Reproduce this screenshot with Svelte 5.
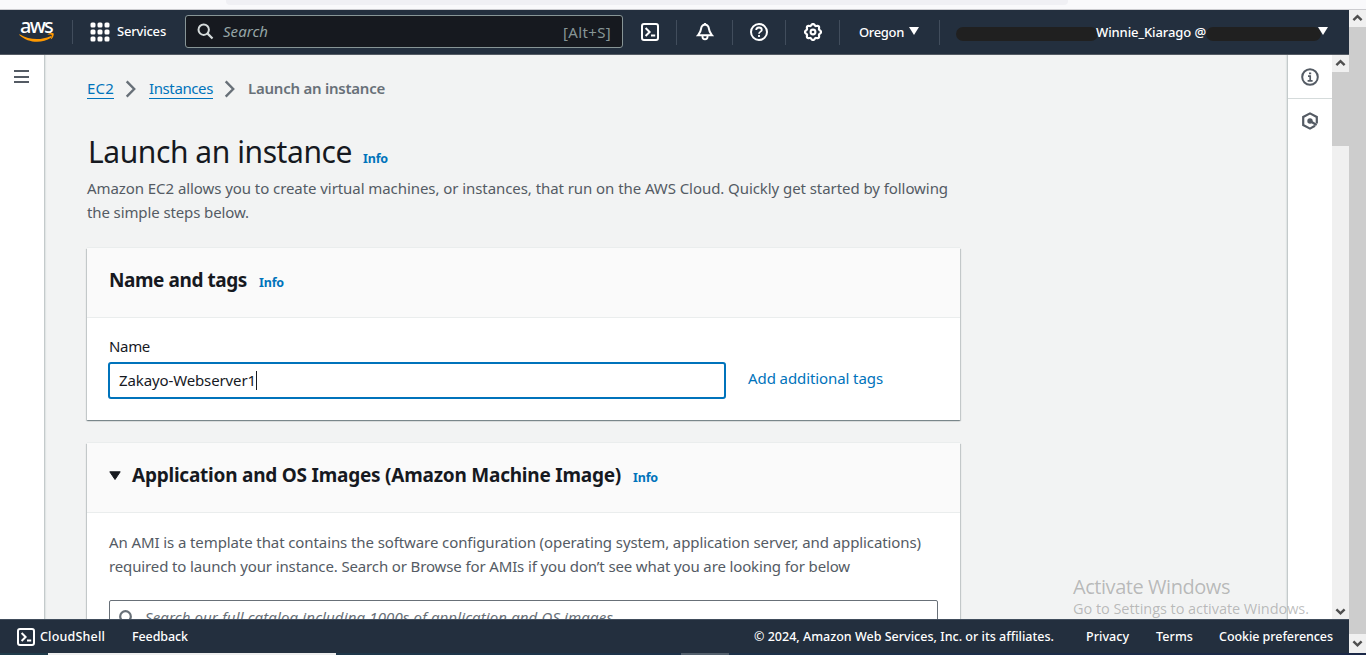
<script>
  // Spreads the tracking of a line so that it fills the given width in pixels.
  function fit(node, width) {
    node.style.letterSpacing = '0px';
    const count = node.textContent.length;
    const natural = node.getBoundingClientRect().width;
    node.style.letterSpacing = (width - natural) / count + 'px';
  }

  const dots = [0, 1, 2, 3, 4, 5, 6, 7, 8];
  const gearTeeth = Array.from({ length: 97 }, (_, i) => {
    const a = (i / 96) * Math.PI * 2;
    const r = 7.3 + 0.75 * Math.cos(a * 8);
    return `${(9 + r * Math.sin(a)).toFixed(2)},${(9 - r * Math.cos(a)).toFixed(2)}`;
  }).join(' ');
</script>

{#snippet shell()}
  <svg class="ico" width="18" height="18" viewBox="0 0 18 18" fill="none" stroke="#fff" stroke-width="2">
    <rect x="1" y="1" width="16" height="16" rx="2" />
    <path d="M4.6 5 8.6 9l-4 4M10 12.5h4.2" />
  </svg>
{/snippet}

{#snippet chevron(up)}
  <svg width="17" height="17" viewBox="0 0 17 17" fill="none" stroke="#505050" stroke-width="2.4">
    {#if up}<path d="M4.4 10.2 8.5 6.1l4.1 4.1" />{:else}<path d="M4.4 7.3 8.5 11.4l4.1-4.1" />{/if}
  </svg>
{/snippet}

{#snippet crumbArrow()}
  <svg class="arrow" width="12" height="18" viewBox="0 0 12 18" fill="none" stroke="#687078" stroke-width="2.4">
    <path d="M1.7 1.4 9.2 9l-7.5 7.6" />
  </svg>
{/snippet}

<div class="window">
  <div class="chrome"><div class="urlbar"></div></div>

  <div class="viewport">
    <div class="console">
      <header>
        <div class="logo">
          <span use:fit={32}>aws</span>
          <svg width="36" height="10" viewBox="0 0 36 10">
            <path d="M1 1.4C10 7 22 7.4 31.3 3.2c1.1-.5 1.8.7.7 1.5C23 10.8 9 10 .6 2.2.1 1.6.4 1 1 1.4Z" fill="#f90" />
            <path d="M28.8.9c2-1.1 5.3-1.1 5.8-.5.5.7-.2 4-2.2 5.7-.4.3-.8.1-.6-.4.6-1.4 1.2-3.3.8-3.8-.4-.5-2.3-.4-3.5-.3-.6 0-.7-.4-.3-.7Z" fill="#f90" />
          </svg>
        </div>
        <div class="services">
          <div class="dots">{#each dots as d (d)}<i></i>{/each}</div>
          <b use:fit={49}>Services</b>
        </div>
        <div class="search">
          <svg width="17" height="17" viewBox="0 0 17 17" fill="none" stroke="#d5dbdb" stroke-width="2">
            <circle cx="6.7" cy="6.7" r="5.2" /><path d="m10.4 10.4 5.1 5.1" stroke-width="2.2" />
          </svg>
          <em use:fit={45}>Search</em>
          <span class="key" use:fit={48}>[Alt+S]</span>
        </div>
        <div class="cell c-shell">{@render shell()}</div>
        <div class="cell c-bell">
          <svg class="ico" width="18" height="18" viewBox="0 0 18 18" fill="none" stroke="#fff" stroke-width="2">
            <path d="M9 1.4C6.6 1.8 5.3 3.4 5.1 5.7 4.9 8.3 4.2 9.7 2 12.3h14c-2.2-2.6-2.9-4-3.1-6.6C12.7 3.4 11.4 1.8 9 1.4Z" />
            <path d="M6.5 12.6v1.2a2.5 2.5 0 0 0 5 0v-1.2M9 0v2" stroke-width="1.9" />
          </svg>
        </div>
        <div class="cell c-help">
          <svg class="ico" width="18" height="18" viewBox="0 0 18 18" fill="none" stroke="#fff" stroke-width="2">
            <circle cx="9" cy="9" r="8" />
            <path d="M6.2 7.1C6.2 5.3 7.4 4.5 9 4.5s2.8.9 2.8 2.4C11.8 8.6 9 8.7 9 10.800M9 12v2" stroke-width="1.8" />
          </svg>
        </div>
        <div class="cell c-gear">
          <svg class="ico" width="18" height="18" viewBox="0 0 18 18" fill="none" stroke="#fff" stroke-width="2.2">
            <polygon points={gearTeeth} /><circle cx="9" cy="9" r="2.4" stroke-width="2.1" />
          </svg>
        </div>
        <div class="cell c-region"><b use:fit={45}>Oregon</b><i class="caret"></i></div>
        <div class="account">
          <i class="mark first"></i><b use:fit={110}>Winnie_Kiarago @</b><i class="mark second"></i><i class="caret"></i>
        </div>
      </header>

      <div class="body">
        <nav class="rail">
          <i></i><i></i><i></i>
        </nav>
        <main>
          <div class="crumbs">
            <a href="#ec2" use:fit={27}>EC2</a>
            {@render crumbArrow()}
            <a href="#instances" use:fit={64}>Instances</a>
            {@render crumbArrow()}
            <b use:fit={137}>Launch an instance</b>
          </div>
          <div class="title">
            <h1 use:fit={264}>Launch an instance</h1>
            <b class="info" use:fit={25}>Info</b>
          </div>
          <p class="lead">
            <span use:fit={861}>Amazon EC2 allows you to create virtual machines, or instances, that run on the AWS Cloud. Quickly get started by following</span><br />
            <span use:fit={162}>the simple steps below.</span>
          </p>

          <section class="card">
            <div class="head"><h2 use:fit={138}>Name and tags</h2><b class="info" use:fit={25}>Info</b></div>
            <div class="fields">
              <div class="label"><span use:fit={41}>Name</span></div>
              <div class="row">
                <div class="input"><span use:fit={137}>Zakayo-Webserver1</span><i></i></div>
                <a href="#tags" use:fit={135}>Add additional tags</a>
              </div>
            </div>
          </section>

          <section class="card second-card">
            <div class="head">
              <svg width="12" height="11" viewBox="0 0 12 11"><path d="M.8.8h10.400L6 8.500Z" fill="#16191f" stroke="#16191f" /></svg>
              <h2 use:fit={489}>Application and OS Images (Amazon Machine Image)</h2><b class="info" use:fit={25}>Info</b>
            </div>
            <div class="about">
              <p>
                <span use:fit={812}>An AMI is a template that contains the software configuration (operating system, application server, and applications)</span><br />
                <span use:fit={741}>required to launch your instance. Search or Browse for AMIs if you don’t see what you are looking for below</span>
              </p>
              <div class="catalog">
                <svg width="16" height="16" viewBox="0 0 16 16" fill="none" stroke="#687078" stroke-width="2.2">
                  <circle cx="6.500" cy="6.500" r="5.300" /><path d="m10.300 10.300 5 5" />
                </svg>
                <em use:fit={468}>Search our full catalog including 1000s of application and OS images</em>
              </div>
            </div>
          </section>
        </main>
        <aside>
          <div class="tool">
            <svg width="18" height="18" viewBox="0 0 18 18" fill="none" stroke="#545b64" stroke-width="2">
              <circle cx="9" cy="9" r="7.800" /><path d="M7 8.200h2.200v4.500M6.600 12.800h5M8 5.300h2.200" stroke-width="1.700" />
            </svg>
          </div>
          <div class="tool">
            <svg width="18" height="18" viewBox="0 0 18 18" fill="none" stroke="#545b64" stroke-width="2.2">
              <path d="M15.800 11.500V5L9 1.400 2.200 5v8L9 16.600l5-2.800" /><circle cx="9" cy="9" r="2.700" fill="#545b64" stroke="none" /><path d="m9 9 6.600 4" />
            </svg>
          </div>
        </aside>
        <div class="scroll inner">
          {@render chevron(true)}
          <div class="thumb"></div>
          <div class="track"></div>
          {@render chevron(false)}
        </div>
        <div class="watermark">
          <div class="big"><span use:fit={157}>Activate Windows</span></div>
          <div class="small"><span use:fit={236}>Go to Settings to activate Windows.</span></div>
        </div>
      </div>

      <footer>
        {@render shell()}
        <b class="f-shell" use:fit={65}>CloudShell</b>
        <b class="f-feed" use:fit={56}>Feedback</b>
        <b class="f-copy" use:fit={300}>© 2024, Amazon Web Services, Inc. or its affiliates.</b>
        <b class="f-priv" use:fit={43}>Privacy</b>
        <b class="f-terms" use:fit={37}>Terms</b>
        <b class="f-cookie" use:fit={114}>Cookie preferences</b>
      </footer>
    </div>
    <div class="scroll outer">
      {@render chevron(true)}
      <div class="thumb"></div>
      {@render chevron(false)}
    </div>
  </div>
  <div class="taskbar"><i class="task-light"></i><i class="task-dim"></i></div>
</div>

<style>
  :global(body) { margin: 0; overflow: hidden; }
  * { box-sizing: border-box; }
  .window {
    width: 1366px; height: 655px; display: flex; flex-direction: column; overflow: hidden;
    font-family: "Noto Sans", sans-serif; font-size: 15px; font-stretch: 94%; line-height: 24px; color: #16191f; white-space: nowrap;
  }
  svg { display: block; flex: none; }
  a { color: #0073bb; text-decoration: none; display: inline-block; }
  h1, h2, p { margin: 0; }
  span, em, b { display: inline-block; }
  b { font-weight: 600; }

  .chrome { height: 10px; flex: none; background: #f9f9fb; border-bottom: 1px solid #ccccd0; }
  .urlbar { margin-left: 226px; width: 842px; height: 5px; background: #f0f0f4; border-radius: 0 0 4px 4px; }
  .viewport { height: 643px; flex: none; display: flex; }
  .console { width: 1349px; display: flex; flex-direction: column; }

  header {
    height: 45px; flex: none; display: flex; align-items: center; background: #232f3e;
    border-bottom: 1px solid #545b64; color: #fff; font-size: 13px;
  }
  header b, footer b { font-weight: 500; }
  .logo { width: 73px; height: 24px; border-right: 1px solid #414d5c; padding-left: 19px; }
  .logo span { display: block; width: max-content; margin: -4px 0 0 1px; height: 17px; font-size: 20px; font-weight: 500; line-height: 19px; }
  .services { width: 112px; display: flex; align-items: center; padding-left: 18px; gap: 8px; }
  .services b { margin-top: -2px; }
  .dots { display: grid; grid-template-columns: repeat(3, 4px); gap: 3px; width: 18px; }
  .dots i { width: 4px; height: 4px; background: #fff; border-radius: 1px; box-shadow: 0 0 0 .5px #fff; }
  .search {
    width: 438px; height: 33px; display: flex; align-items: center; background: #16191f;
    border: 1px solid #879596; border-radius: 3px; padding: 0 11px 0 11px; margin-top: -1px; font-size: 15px; color: #95a5a6;
  }
  .search em { margin-left: 9px; margin-top: -1px; }
  .search .key { margin-left: auto; color: #879596; }
  .cell { height: 25px; display: flex; align-items: center; border-right: 1px solid #414d5c; }
  .c-shell { width: 54px; padding-left: 18px; }
  .c-bell { width: 56px; padding-left: 19px; }
  .c-help { width: 53px; padding-left: 17px; }
  .c-gear { width: 54px; padding-left: 18px; }
  .c-region { width: 100px; padding-left: 19px; gap: 6px; }
  .caret { width: 10px; height: 8px; background: #fff; clip-path: polygon(0 0, 100% 0, 50% 100%); }
  .c-region .caret { margin: -2px 0 0 -1px; }
  .account { display: flex; align-items: center; padding-left: 16px; }
  .mark { height: 14px; border-radius: 7px; background: #202020; margin-top: 4px; }
  .first { width: 142px; margin-right: -2px; margin-top: 3px; }
  .second { width: 115px; }
  .account .caret { margin: -2px 0 0 -3px; }

  .body { height: 564px; flex: none; display: flex; position: relative; overflow: hidden; background: #f2f3f3; }
  .rail {
    width: 45px; background: #fff; border-right: 1px solid #c4cacb; box-shadow: 1px 0 1px #e1e5e5;
    padding: 15px 0 0 14px; display: flex; flex-direction: column; gap: 3.500px;
  }
  .rail i { width: 15px; height: 2px; background: #545b64; }
  main { width: 1242px; padding-left: 42px; }
  .crumbs { display: flex; align-items: center; height: 24px; margin-top: 22px; }
  .crumbs a { line-height: 22px; height: 22px; border-bottom: 1px solid #0073bb; margin-top: -2px; }
  .crumbs .arrow { margin: 0 12px 0 11px; }
  .crumbs b { color: #687078; line-height: 20px; height: 22px; }
  .title { display: flex; align-items: baseline; height: 36px; margin-top: 33px; }
  h1 { font-size: 30px; line-height: 36px; font-weight: 400; margin-left: 1px; }
  .info { color: #0073bb; font-size: 12.500px; line-height: 20px; margin-left: 12px; font-weight: 700; }
  .title .info { margin-left: 11px; }
  .lead { color: #545b64; margin-top: 6px; height: 48px; }
  .card {
    width: 873px; margin-top: 24px; height: 172px; background: #fff;
    box-shadow: 0 1px 1px 0 rgba(0,28,36,.3), 1px 1px 1px 0 rgba(0,28,36,.15), -1px 1px 1px 0 rgba(0,28,36,.15), 0 -1px 0 0 #eaeded;
  }
  .second-card { margin-top: 23px; height: 240px; }
  .head { height: 70px; background: #fafafa; border-bottom: 1px solid #eaeded; padding: 19px 22px 0; display: flex; align-items: baseline; }
  .head svg { margin-right: 11px; }
  h2 { font-size: 19px; line-height: 26px; font-weight: 700; }
  .fields { padding: 16px 22px 0; }
  .label { height: 24px; }
  .row { display: flex; align-items: center; margin-top: 4px; gap: 22px; }
  .row a { margin-top: -5px; }
  .input { width: 618px; height: 37px; margin-left: -1px; border: 2px solid #0073bb; border-radius: 3px; padding-left: 9px; display: flex; align-items: center; }
  .input span { margin-top: -2px; }
  .input i { width: 1px; height: 19px; background: #16191f; }
  .about { padding: 17px 22px 0; color: #545b64; }
  .catalog { margin-top: 22px; width: 829px; height: 36px; border: 1px solid #687078; border-radius: 2px; display: flex; align-items: center; padding-left: 9px; color: #687078; }
  .catalog em { margin: -2px 0 0 10px; }
  aside { width: 45px; background: #fff; border-left: 1px solid #c4cacb; box-shadow: -1px 0 1px #e1e5e5; }
  .tool { height: 44px; display: flex; align-items: center; justify-content: center; border-bottom: 1px solid #d5dbdb; }
  .tool + .tool { border: 0; }
  .scroll { width: 17px; flex: none; display: flex; flex-direction: column; background: #f0f0f0; }
  .thumb { background: #cdcdcd; }
  .inner .thumb { height: 74px; }
  .inner .track { flex: 1; }
  .outer .thumb { height: 607px; }
  .watermark { position: absolute; left: 1073px; top: 519px; color: rgba(120,120,120,.48); font-family: "Open Sans", sans-serif; }
  .big { font-size: 20px; line-height: 25px; font-weight: 400; }
  .small { font-size: 14.500px; line-height: 20px; }

  footer {
    height: 34px; flex: none; display: flex; align-items: center; background: #232f3e;
    border-top: 1px solid #414d5c; color: #fff; font-size: 12.500px; padding-left: 17px;
  }
  .f-shell { margin-left: 5px; }
  .f-feed { margin-left: 27px; }
  .f-copy { margin-left: 566px; }
  .f-priv { margin-left: 32px; }
  .f-terms { margin-left: 27px; }
  .f-cookie { margin-left: 26px; }
  .taskbar { height: 2px; flex: none; background: linear-gradient(90deg, #203c4b, #1b2847); display: flex; }
  .task-light { width: 288px; margin-left: 48px; background: #eee; }
  .task-dim { width: 48px; margin-left: 345px; background: #53606d; }
</style>
